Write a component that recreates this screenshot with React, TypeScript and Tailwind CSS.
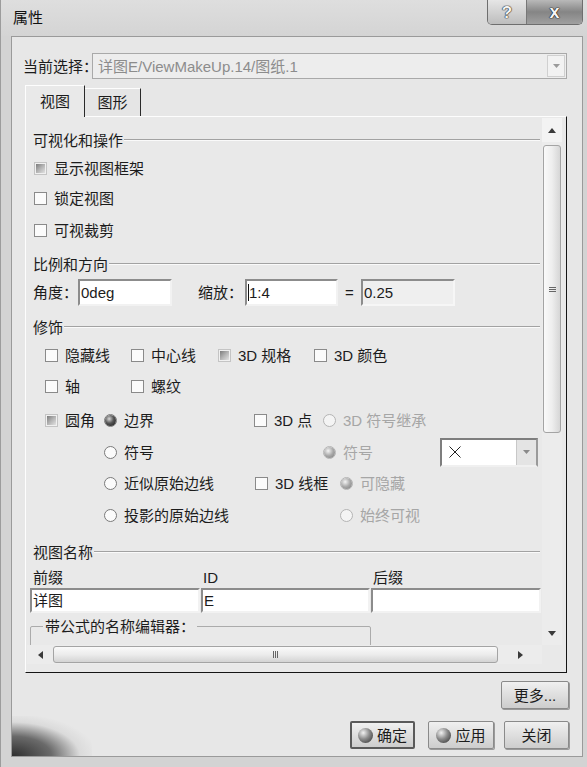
import React from "react";

const T = "text-[15px] leading-none text-[#1c1c1c] whitespace-nowrap";

function Box({ mixed }: { mixed?: boolean }) {
  return (
    <span
      className={`w-[13px] h-[13px] shrink-0 border flex items-center justify-center ${
        mixed ? "border-[#c4c4c4] bg-[#f0f0f0]" : "border-[#8a8a8a] bg-[#fbfbfb]"
      }`}
    >
      {mixed && <span className="w-[9px] h-[9px] bg-gradient-to-br from-[#7c7c7c] via-[#b4b4b4] to-[#e2e2e2]" />}
    </span>
  );
}

function CB({ label, mixed }: { label: string; mixed?: boolean }) {
  return (
    <span className="flex items-center">
      <Box mixed={mixed} />
      <span className={`ml-[7px] ${T}`}>{label}</span>
    </span>
  );
}

function Radio({ label, checked, disabled }: { label: string; checked?: boolean; disabled?: boolean }) {
  return (
    <span className="flex items-center">
      <span
        className={`w-[13px] h-[13px] shrink-0 rounded-full border flex items-center justify-center ${
          disabled ? "border-[#b4b4b4] bg-[#f4f4f4]" : "border-[#7a7a7a] bg-[#fbfbfb]"
        }`}
      >
        {checked && !disabled && (
          <span className="w-[11px] h-[11px] rounded-full bg-[radial-gradient(circle_at_38%_35%,#d8d8d8_0%,#555_45%,#151515_100%)]" />
        )}
        {checked && disabled && (
          <span className="w-[11px] h-[11px] rounded-full bg-[radial-gradient(circle_at_38%_35%,#f4f4f4_0%,#a8a8a8_50%,#7a7a7a_100%)]" />
        )}
      </span>
      <span className={`ml-[7px] text-[15px] leading-none whitespace-nowrap ${disabled ? "text-[#a6a6a6]" : "text-[#1c1c1c]"}`}>
        {label}
      </span>
    </span>
  );
}

function Header({ label }: { label: string }) {
  return (
    <div className="flex items-center h-[22px] pl-[6px] pr-[2px]">
      <span className={T}>{label}</span>
      <div className="flex-1 ml-[1px] border-t border-t-[#a2a2a2] border-b border-b-[#fafafa]" />
    </div>
  );
}

function Sphere() {
  return (
    <span className="w-[15px] h-[15px] rounded-full shrink-0 bg-[radial-gradient(circle_at_35%_32%,#f2f2f2_0%,#8a8a8a_45%,#2a2a2a_100%)]" />
  );
}

function Triangle({ dir }: { dir: "up" | "down" | "left" | "right" }) {
  const pts =
    dir === "up" ? "0,5 4,0 8,5" : dir === "down" ? "0,0 8,0 4,5" : dir === "left" ? "5,0 5,8 0,4" : "0,0 0,8 5,4";
  const w = dir === "up" || dir === "down" ? 8 : 5;
  const h = dir === "up" || dir === "down" ? 5 : 8;
  return (
    <svg width={w} height={h} viewBox={`0 0 ${w} ${h}`}>
      <polygon points={pts} fill="#3a3a3a" />
    </svg>
  );
}

export default function App() {
  return (
    <div className="w-[587px] h-[767px] bg-[#d3d3d3] flex flex-col font-['Liberation_Sans','Noto_Sans_CJK_SC',sans-serif] overflow-hidden border-l border-[#9c9c9c]">
      {/* title bar */}
      <div className="h-[36px] flex items-start shrink-0 bg-gradient-to-b from-[#dedede] to-[#d4d4d4]">
        <span className="pl-[12px] pt-[10px] text-[15px] leading-none text-[#111]">属性</span>
        <div className="ml-auto mr-[4px] flex h-[25px] rounded-b-[5px] border border-t-0 border-[#6e6e6e] overflow-hidden">
          <div className="w-[39px] h-full flex items-center justify-center bg-gradient-to-b from-[#e6e6e6] to-[#bdbdbd] border-r border-[#777]">
            <span className="text-[17px] font-bold leading-none text-[#f4f4f4] [text-shadow:0_0_1px_#222,0_0_1px_#222,0_0_1px_#222]">?</span>
          </div>
          <div className="w-[55px] h-full flex items-center justify-center bg-gradient-to-b from-[#b9b9b9] via-[#858585] to-[#a0a0a0]">
            <span className="text-[18px] font-bold leading-none text-[#f6f6f6] [text-shadow:0_0_1px_#111,0_0_1px_#111,0_0_1px_#111]">x</span>
          </div>
        </div>
      </div>

      {/* body */}
      <div className="relative ml-[10px] w-[572px] h-[721px] shrink-0 bg-[#e7e7e7] border border-[#9a9a9a] flex flex-col overflow-hidden">
        {/* current selection */}
        <div className="mt-[16px] h-[26px] shrink-0 flex items-center pl-[11px]">
          <span className={`w-[69px] shrink-0 ${T}`}>当前选择：</span>
          <div className="w-[475px] h-[26px] shrink-0 border border-[#a9a9a9] bg-[#ededed] flex items-center">
            <span className="pl-[5px] text-[15px] leading-none text-[#8c8c8c]">详图E/ViewMakeUp.14/图纸.1</span>
            <div className="ml-auto mr-[1px] w-[18px] h-[22px] border border-[#d0d0d0] bg-[#f2f2f2] flex items-center justify-center">
              <svg width="7" height="4" viewBox="0 0 7 4">
                <polygon points="0,0 7,0 3.5,4" fill="#9a9a9a" />
              </svg>
            </div>
          </div>
        </div>

        {/* tabs */}
        <div className="mt-[6px] ml-[13px] flex items-end h-[31px] shrink-0">
          <div className="relative z-10 w-[60px] h-[32px] -mb-[1px] bg-[#e9e9e9] border-l border-t border-l-[#fdfdfd] border-t-[#fdfdfd] border-r border-r-[#2a2a2a] flex items-center justify-center">
            <span className={T}>视图</span>
          </div>
          <div className="w-[56px] h-[28px] bg-[#e5e5e5] border-t border-t-[#fdfdfd] border-r border-r-[#2a2a2a] flex items-center justify-center">
            <span className={T}>图形</span>
          </div>
        </div>

        {/* panel */}
        <div className="ml-[13px] w-[542px] h-[557px] shrink-0 bg-[#e9e9e9] border-l border-t border-l-[#fdfdfd] border-t-[#fdfdfd] border-r border-b border-r-[#151515] border-b-[#151515] pt-[1px] pl-[1px] flex flex-col">
          <div className="flex h-[527px] shrink-0">
            {/* scroll content */}
            <div className="w-[515px] h-[527px] overflow-hidden pt-[11px]">
              <Header label="可视化和操作" />
              <div className="mt-[6px] h-[22px] flex items-center pl-[7px]">
                <CB label="显示视图框架" mixed />
              </div>
              <div className="mt-[8px] h-[22px] flex items-center pl-[7px]">
                <CB label="锁定视图" />
              </div>
              <div className="mt-[10px] h-[22px] flex items-center pl-[7px]">
                <CB label="可视裁剪" />
              </div>

              <div className="mt-[12px]">
                <Header label="比例和方向" />
              </div>
              <div className="mt-[3px] h-[28px] flex items-center pl-[6px]">
                <span className={`w-[45px] shrink-0 ${T}`}>角度：</span>
                <div className="w-[94px] h-[27px] shrink-0 bg-white border-2 border-t-[#8c8c8c] border-l-[#8c8c8c] border-r-[#f2f2f2] border-b-[#f2f2f2] flex items-center pl-[1px]">
                  <span className={T}>0deg</span>
                </div>
                <span className="w-[26px] shrink-0" />
                <span className={`w-[47px] shrink-0 ${T}`}>缩放：</span>
                <div className="w-[93px] h-[27px] shrink-0 bg-white border-2 border-t-[#8c8c8c] border-l-[#8c8c8c] border-r-[#f2f2f2] border-b-[#f2f2f2] flex items-center pl-[1px]">
                  <span className="w-[1px] h-[17px] bg-[#111]" />
                  <span className={T}>1:4</span>
                </div>
                <span className={`w-[23px] shrink-0 text-center ${T}`}>=</span>
                <div className="w-[94px] h-[27px] shrink-0 bg-[#efefef] border-2 border-t-[#8c8c8c] border-l-[#8c8c8c] border-r-[#f6f6f6] border-b-[#f6f6f6] flex items-center pl-[1px]">
                  <span className={T}>0.25</span>
                </div>
              </div>

              <div className="mt-[10px]">
                <Header label="修饰" />
              </div>
              <div className="mt-[6px] h-[22px] flex items-center pl-[18px]">
                <div className="w-[86px] shrink-0"><CB label="隐藏线" /></div>
                <div className="w-[87px] shrink-0"><CB label="中心线" /></div>
                <div className="w-[96px] shrink-0"><CB label="3D 规格" mixed /></div>
                <CB label="3D 颜色" />
              </div>
              <div className="mt-[9px] h-[22px] flex items-center pl-[18px]">
                <div className="w-[86px] shrink-0"><CB label="轴" /></div>
                <CB label="螺纹" />
              </div>
              <div className="mt-[12px] h-[22px] flex items-center pl-[18px]">
                <div className="w-[59px] shrink-0"><CB label="圆角" mixed /></div>
                <div className="w-[150px] shrink-0"><Radio label="边界" checked /></div>
                <div className="w-[69px] shrink-0"><CB label="3D 点" /></div>
                <Radio label="3D 符号继承" disabled />
              </div>
              <div className="mt-[10px] h-[22px] flex items-center pl-[77px]">
                <div className="w-[219px] shrink-0"><Radio label="符号" /></div>
                <div className="w-[117px] shrink-0"><Radio label="符号" checked disabled /></div>
                <div className="w-[98px] h-[29px] shrink-0 bg-white border-2 border-t-[#7e7e7e] border-l-[#7e7e7e] border-r-[#9a9a9a] border-b-[#f0f0f0] flex items-center">
                  <svg className="ml-[7px]" width="12" height="12" viewBox="0 0 12 12">
                    <line x1="0.5" y1="0.5" x2="11.5" y2="11.5" stroke="#222" strokeWidth="1" />
                    <line x1="11.5" y1="0.5" x2="0.5" y2="11.5" stroke="#222" strokeWidth="1" />
                  </svg>
                  <div className="ml-auto w-[20px] h-full bg-[#e4e4e4] border-l border-[#c8c8c8] flex items-center justify-center">
                    <svg width="7" height="4" viewBox="0 0 7 4">
                      <polygon points="0,0 7,0 3.5,4" fill="#8a8a8a" />
                    </svg>
                  </div>
                </div>
              </div>
              <div className="mt-[9px] h-[22px] flex items-center pl-[77px]">
                <div className="w-[151px] shrink-0"><Radio label="近似原始边线" /></div>
                <div className="w-[85px] shrink-0"><CB label="3D 线框" /></div>
                <Radio label="可隐藏" checked disabled />
              </div>
              <div className="mt-[10px] h-[22px] flex items-center pl-[77px]">
                <div className="w-[236px] shrink-0"><Radio label="投影的原始边线" /></div>
                <Radio label="始终可视" disabled />
              </div>

              <div className="mt-[15px]">
                <Header label="视图名称" />
              </div>
              <div className="mt-[3px] h-[22px] flex items-center pl-[6px]">
                <span className={`w-[170px] shrink-0 ${T}`}>前缀</span>
                <span className={`w-[170px] shrink-0 ${T}`}>ID</span>
                <span className={T}>后缀</span>
              </div>
              <div className="h-[25px] flex pl-[3px] gap-[1px]">
                <div className="w-[170px] h-[25px] shrink-0 bg-white border-2 border-t-[#8c8c8c] border-l-[#8c8c8c] border-r-[#f2f2f2] border-b-[#f2f2f2] flex items-center pl-[1px]">
                  <span className={T}>详图</span>
                </div>
                <div className="w-[169px] h-[25px] shrink-0 bg-white border-2 border-t-[#8c8c8c] border-l-[#8c8c8c] border-r-[#f2f2f2] border-b-[#f2f2f2] flex items-center pl-[1px]">
                  <span className={T}>E</span>
                </div>
                <div className="w-[170px] h-[25px] shrink-0 bg-white border-2 border-t-[#8c8c8c] border-l-[#8c8c8c] border-r-[#f2f2f2] border-b-[#f2f2f2]" />
              </div>
              <fieldset className="mt-[6px] ml-[3px] w-[341px] h-[40px] border border-[#ababab] rounded-[2px] pl-[12px]">
                <legend className={`px-[2px] ${T}`}>带公式的名称编辑器：</legend>
              </fieldset>
            </div>

            {/* vertical scrollbar */}
            <div className="w-[20px] h-[527px] bg-[#ececec] flex flex-col">
              <div className="h-[24px] shrink-0 flex items-center justify-center bg-[#f3f3f3]">
                <Triangle dir="up" />
              </div>
              <div className="mt-[3px] h-[288px] shrink-0 mx-[1px] rounded-[3px] border border-[#a4a4a4] bg-gradient-to-r from-[#fafafa] via-[#eeeeee] to-[#d6d6d6] flex items-center justify-center">
                <svg width="7" height="7" viewBox="0 0 7 7">
                  <line x1="0" y1="1.5" x2="7" y2="1.5" stroke="#666" strokeWidth="1" />
                  <line x1="0" y1="3.5" x2="7" y2="3.5" stroke="#666" strokeWidth="1" />
                  <line x1="0" y1="5.5" x2="7" y2="5.5" stroke="#666" strokeWidth="1" />
                </svg>
              </div>
              <div className="flex-1" />
              <div className="h-[24px] shrink-0 flex items-center justify-center">
                <Triangle dir="down" />
              </div>
            </div>
          </div>

          {/* horizontal scrollbar */}
          <div className="h-[19px] w-[515px] shrink-0 flex items-center bg-[#ececec]">
            <div className="w-[26px] flex justify-center"><Triangle dir="left" /></div>
            <div className="w-[445px] h-[17px] rounded-[3px] border border-[#a4a4a4] bg-gradient-to-b from-[#fafafa] via-[#ececec] to-[#d4d4d4] flex items-center justify-center">
              <svg width="7" height="7" viewBox="0 0 7 7">
                <line x1="1.5" y1="0" x2="1.5" y2="7" stroke="#666" strokeWidth="1" />
                <line x1="3.5" y1="0" x2="3.5" y2="7" stroke="#666" strokeWidth="1" />
                <line x1="5.5" y1="0" x2="5.5" y2="7" stroke="#666" strokeWidth="1" />
              </svg>
            </div>
            <div className="flex-1 flex justify-center"><Triangle dir="right" /></div>
          </div>
        </div>

        {/* more button */}
        <div className="mt-[8px] flex justify-end pr-[13px] shrink-0">
          <button className="w-[68px] h-[28px] rounded-[2px] border border-[#8a8a8a] bg-gradient-to-b from-[#f0f0f0] to-[#cdcdcd] shadow-[1px_1px_0_#9a9a9a] flex items-center justify-center">
            <span className={T}>更多...</span>
          </button>
        </div>

        {/* action buttons */}
        <div className="mt-[12px] flex justify-end pr-[13px] shrink-0">
          <button className="w-[65px] h-[28px] rounded-[2px] border-2 border-[#5a5a5a] bg-gradient-to-b from-[#f0f0f0] to-[#cdcdcd] flex items-center justify-center gap-[4px]">
            <Sphere />
            <span className={T}>确定</span>
          </button>
          <button className="ml-[13px] w-[66px] h-[28px] rounded-[2px] border border-[#8a8a8a] bg-gradient-to-b from-[#f0f0f0] to-[#cdcdcd] shadow-[1px_1px_0_#9a9a9a] flex items-center justify-center gap-[4px]">
            <Sphere />
            <span className={T}>应用</span>
          </button>
          <button className="ml-[10px] w-[65px] h-[28px] rounded-[2px] border border-[#8a8a8a] bg-gradient-to-b from-[#f0f0f0] to-[#cdcdcd] shadow-[1px_1px_0_#9a9a9a] flex items-center justify-center">
            <span className={T}>关闭</span>
          </button>
        </div>

        {/* decorative smudge bottom-left */}
        <div className="absolute left-0 bottom-0 w-[80px] h-[40px] bg-[radial-gradient(ellipse_at_bottom_left,#2e2e2e_0%,#6a6a6a_35%,rgba(200,200,200,0.4)_60%,transparent_75%)] pointer-events-none" />
      </div>
    </div>
  );
}
